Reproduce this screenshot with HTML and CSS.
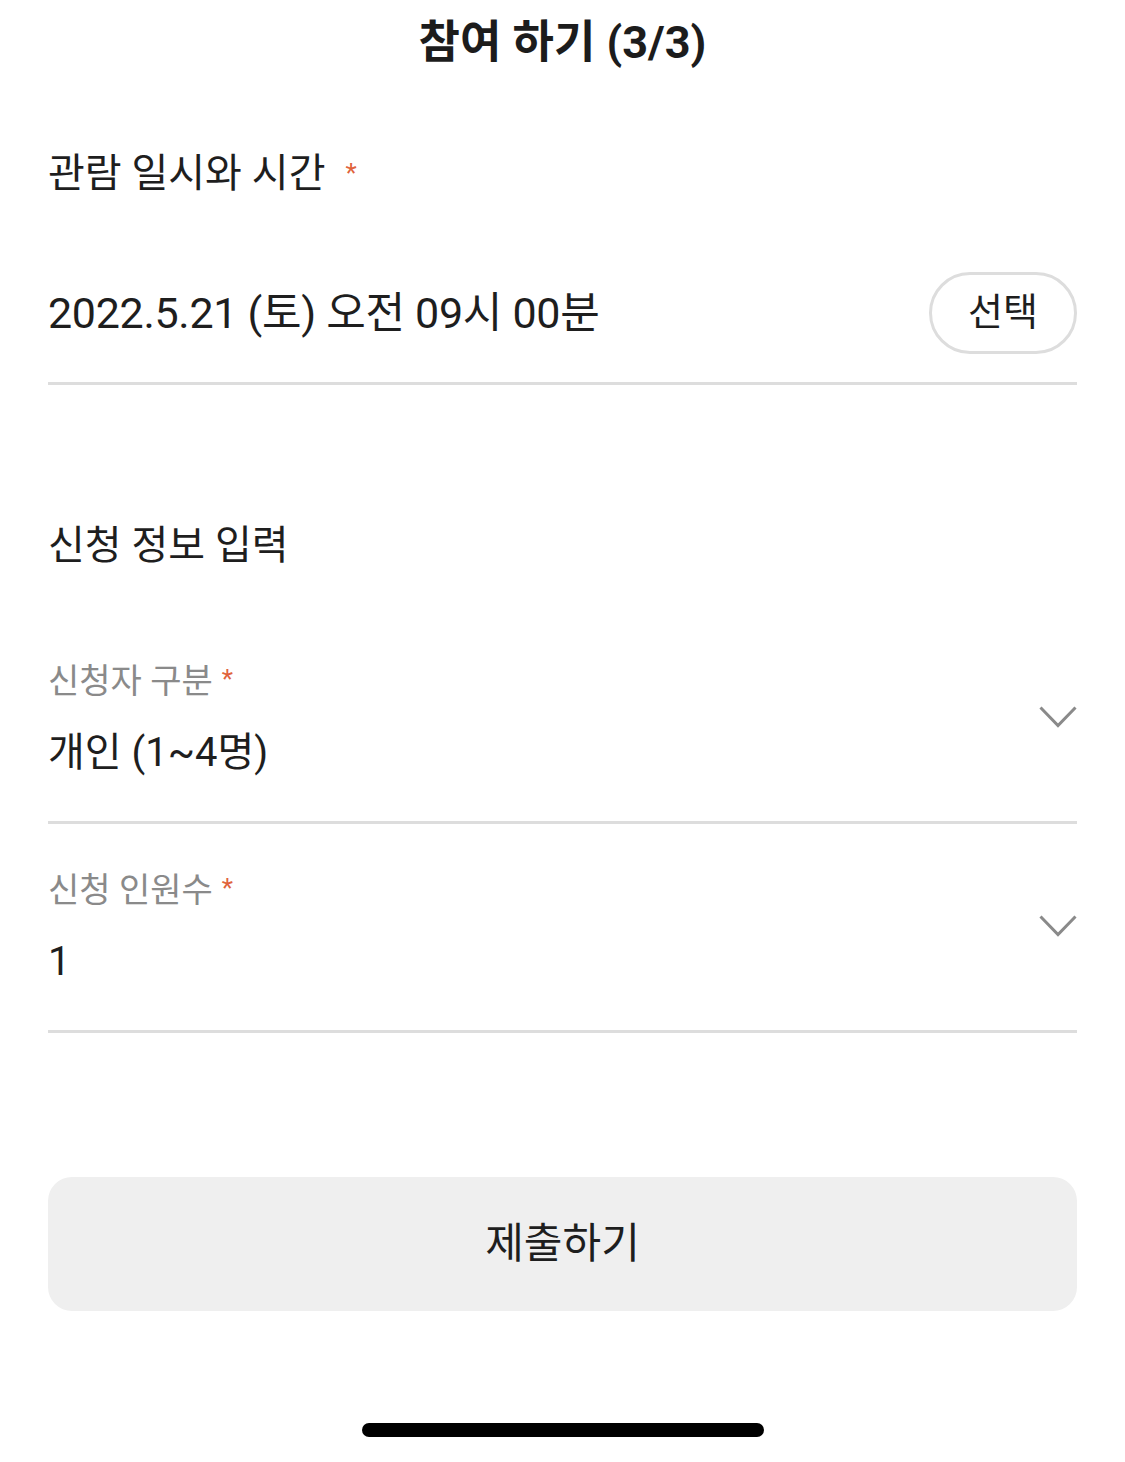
FILE: index.html
```html
<!DOCTYPE html>
<html lang="ko">
<head>
<meta charset="UTF-8">
<title>참여 하기</title>
<link rel="stylesheet" href="styles.css">
</head>
<body>
<div class="sheet">
  <h1 class="title">참여 하기 (3/3)</h1>

  <div class="heading">관람 일시와 시간<span class="req req_big">*</span></div>
  <div class="date_row">
    <span class="date_text">2022.5.21 (토) 오전 09시 00분</span>
    <div class="pick_button">선택</div>
  </div>

  <div class="section_title">신청 정보 입력</div>

  <div class="field first">
    <div class="field_body">
      <div class="label">신청자 구분<span class="req">*</span></div>
      <div class="value">개인 (1~4명)</div>
    </div>
    <svg class="chevron" width="38" height="22" viewBox="0 0 38 22"><polyline points="1.5,1.5 19,19.5 36.5,1.5" fill="none" stroke="#8a8a8a" stroke-width="3"/></svg>
  </div>

  <div class="field">
    <div class="field_body">
      <div class="label">신청 인원수<span class="req">*</span></div>
      <div class="value">1</div>
    </div>
    <svg class="chevron" width="38" height="22" viewBox="0 0 38 22"><polyline points="1.5,1.5 19,19.5 36.5,1.5" fill="none" stroke="#8a8a8a" stroke-width="3"/></svg>
  </div>

  <div class="submit_button">제출하기</div>

  <div class="home_bar"></div>
</div>
</body>
</html>
```

FILE: styles.css
```css
html, body {
  margin: 0;
  background: #ffffff;
}

body {
  font-family: Roboto, "Noto Sans CJK KR", sans-serif;
  color: #1e1e1e;
}

.sheet {
  padding: 0 48px;
}

.title {
  margin: 0;
  height: 86px;
  line-height: 86px;
  overflow: hidden;
  text-align: center;
  font-size: 45px;
  font-weight: 700;
  color: #1c1c1c;
}

.heading {
  margin-top: 64px;
  height: 48px;
  line-height: 48px;
  font-size: 40px;
}

.req {
  position: relative;
  top: -5px;
  color: #e0633c;
  font-size: 26px;
  margin-left: 9px;
}
.req_big {
  margin-left: 20px;
}

.date_row {
  margin-top: 74px;
  display: flex;
  align-items: center;
  justify-content: space-between;
  padding-bottom: 28px;
  border-bottom: 3px solid #dddddd;
}

.date_text {
  padding-bottom: 8px;
  font-size: 43px;
  letter-spacing: -0.3px;
}

.pick_button {
  box-sizing: border-box;
  width: 148px;
  height: 82px;
  border: 3px solid #dddddd;
  border-radius: 41px;
  text-align: center;
  line-height: 74px;
  font-size: 38px;
}

.section_title {
  margin-top: 137px;
  height: 48px;
  line-height: 48px;
  font-size: 40px;
}

.field {
  margin-top: 44px;
  display: flex;
  align-items: center;
  justify-content: space-between;
  padding-bottom: 43px;
  border-bottom: 3px solid #dddddd;
}
.field.first {
  margin-top: 89px;
}

.label {
  height: 44px;
  line-height: 44px;
  font-size: 34px;
  color: #8a8a8a;
}

.value {
  margin-top: 25px;
  height: 50px;
  line-height: 50px;
  font-size: 40px;
}

.chevron {
  display: block;
  margin-top: -4px;
}

.submit_button {
  margin-top: 144px;
  height: 134px;
  line-height: 134px;
  background: #efefef;
  border-radius: 24px;
  text-align: center;
  font-size: 42px;
}

.home_bar {
  width: 402px;
  height: 14px;
  margin: 112px auto 0;
  background: #000000;
  border-radius: 7px;
}
```
